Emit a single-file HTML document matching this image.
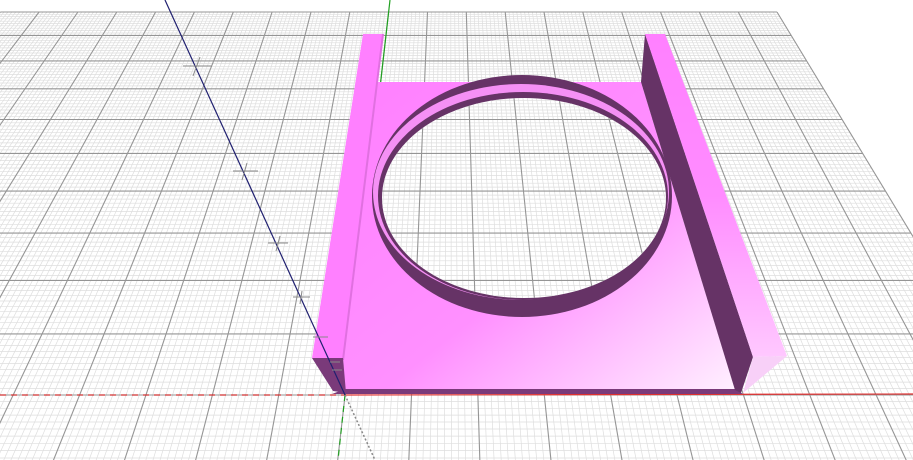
<!DOCTYPE html>
<html><head><meta charset="utf-8"><style>
html,body{margin:0;padding:0;background:#fff;overflow:hidden;width:913px;height:460px}
svg{display:block;overflow:hidden}
</style></head><body>
<svg id="s" width="913" height="460" viewBox="0 0 913 460" xmlns="http://www.w3.org/2000/svg" overflow="hidden">
<defs>
<clipPath id="frame"><rect width="913" height="460"/></clipPath>
<g id="grid"></g>
<clipPath id="hole"><ellipse cx="524" cy="198" rx="142" ry="100"/></clipPath>
<linearGradient id="pg" x1="0" y1="0" x2="1" y2="1">
<stop offset="0" stop-color="#ff80ff"/><stop offset="0.55" stop-color="#ff90ff"/><stop offset="1" stop-color="#fff0ff"/>
</linearGradient>
<linearGradient id="rg" x1="0" y1="0" x2="0" y2="1">
<stop offset="0" stop-color="#ff80ff"/><stop offset="0.5" stop-color="#ff8cff"/><stop offset="1" stop-color="#ffc8ff"/>
</linearGradient>
</defs>
<g clip-path="url(#frame)">
<rect width="913" height="460" fill="#fff"/>
<use href="#grid"/>
<line x1="0" y1="395" x2="345" y2="395" stroke="#d03030" stroke-width="1.2" stroke-dasharray="6,5"/>
<line x1="345" y1="395" x2="913" y2="394" stroke="#e03030" stroke-width="1.2"/>
<line x1="345" y1="395" x2="390" y2="0" stroke="#20a020" stroke-width="1.2"/>
<line x1="345" y1="395" x2="338" y2="460" stroke="#20a020" stroke-width="1.2" stroke-dasharray="6,5"/>
<line x1="345" y1="395" x2="375" y2="460" stroke="#888" stroke-width="1.5" stroke-dasharray="2,2"/>
<polygon points="377,82 641,82 735,390 345,390 343,358" fill="url(#pg)"/>
<ellipse cx="522" cy="196" rx="150" ry="121" fill="#663366"/>
<ellipse cx="521" cy="192" rx="148" ry="108" fill="#f590f5"/>
<ellipse cx="523" cy="196" rx="145" ry="104" fill="#663366"/>
<ellipse cx="524" cy="198" rx="142" ry="100" fill="#fff"/>
<use href="#grid" clip-path="url(#hole)"/>
<polygon points="345,389 735,389 743,394 332,394" fill="#7a3a7a"/>
<polygon points="363,34 383,34 343,360 312,358" fill="#ff80ff"/>
<line x1="383" y1="34" x2="343" y2="360" stroke="#e070e0" stroke-width="2"/>
<polygon points="312,358 343,358 346,393 333,391" fill="#7a3a7a"/>
<polygon points="641,82 645,34 753,357 741,393 735,390" fill="#663366"/>
<polygon points="645,34 665,34 787,356 753,357" fill="url(#rg)"/>
<polygon points="753,357 787,356 743,393" fill="#f8d0f8"/>
<line x1="345" y1="395" x2="165" y2="0" stroke="#202070" stroke-width="1.2"/>
<g stroke="#888" stroke-width="1">
<line x1="183" y1="66" x2="212" y2="66"/><line x1="200" y1="57" x2="193" y2="76"/>
<line x1="233" y1="171" x2="258" y2="171"/><line x1="247" y1="163" x2="242" y2="180"/>
<line x1="268" y1="243" x2="288" y2="243"/><line x1="280" y1="236" x2="276" y2="251"/>
<line x1="293" y1="297" x2="310" y2="297"/><line x1="302" y1="291" x2="300" y2="304"/>
<line x1="313" y1="337" x2="328" y2="337"/>
<line x1="330" y1="362" x2="340" y2="362"/><line x1="332" y1="370" x2="342" y2="370"/>
</g>
</g>
</svg>
<script>
(function(){
var NS="http://www.w3.org/2000/svg",g=document.getElementById("grid");
var vx=450,vy=-528,A=13015,v0=14.1,B=936,u0=1.58;
function P(u,v){var d=v+v0;return [vx+(u-u0)*B/d, vy+A/d];}
function L(a,b,c,w){var l=document.createElementNS(NS,"line");l.setAttribute("x1",a[0].toFixed(1));l.setAttribute("y1",a[1].toFixed(1));l.setAttribute("x2",b[0].toFixed(1));l.setAttribute("y2",b[1].toFixed(1));l.setAttribute("stroke",c);l.setAttribute("stroke-width",w);g.appendChild(l);}
var i,t;
for(i=-100;i<=100;i++){t=i/10;if(i%10)L(P(t,-10),P(t,10),"#dedede",0.7);}
for(i=-100;i<=100;i++){t=i/10;if(i%10)L(P(-10,t),P(10,t),"#dedede",0.7);}
for(i=-10;i<=10;i++){L(P(i,-10),P(i,10),"#959595",1.1);}
for(i=-10;i<=10;i++){L(P(-10,i),P(10,i),"#959595",1.1);}
})();
</script>
</body></html>
